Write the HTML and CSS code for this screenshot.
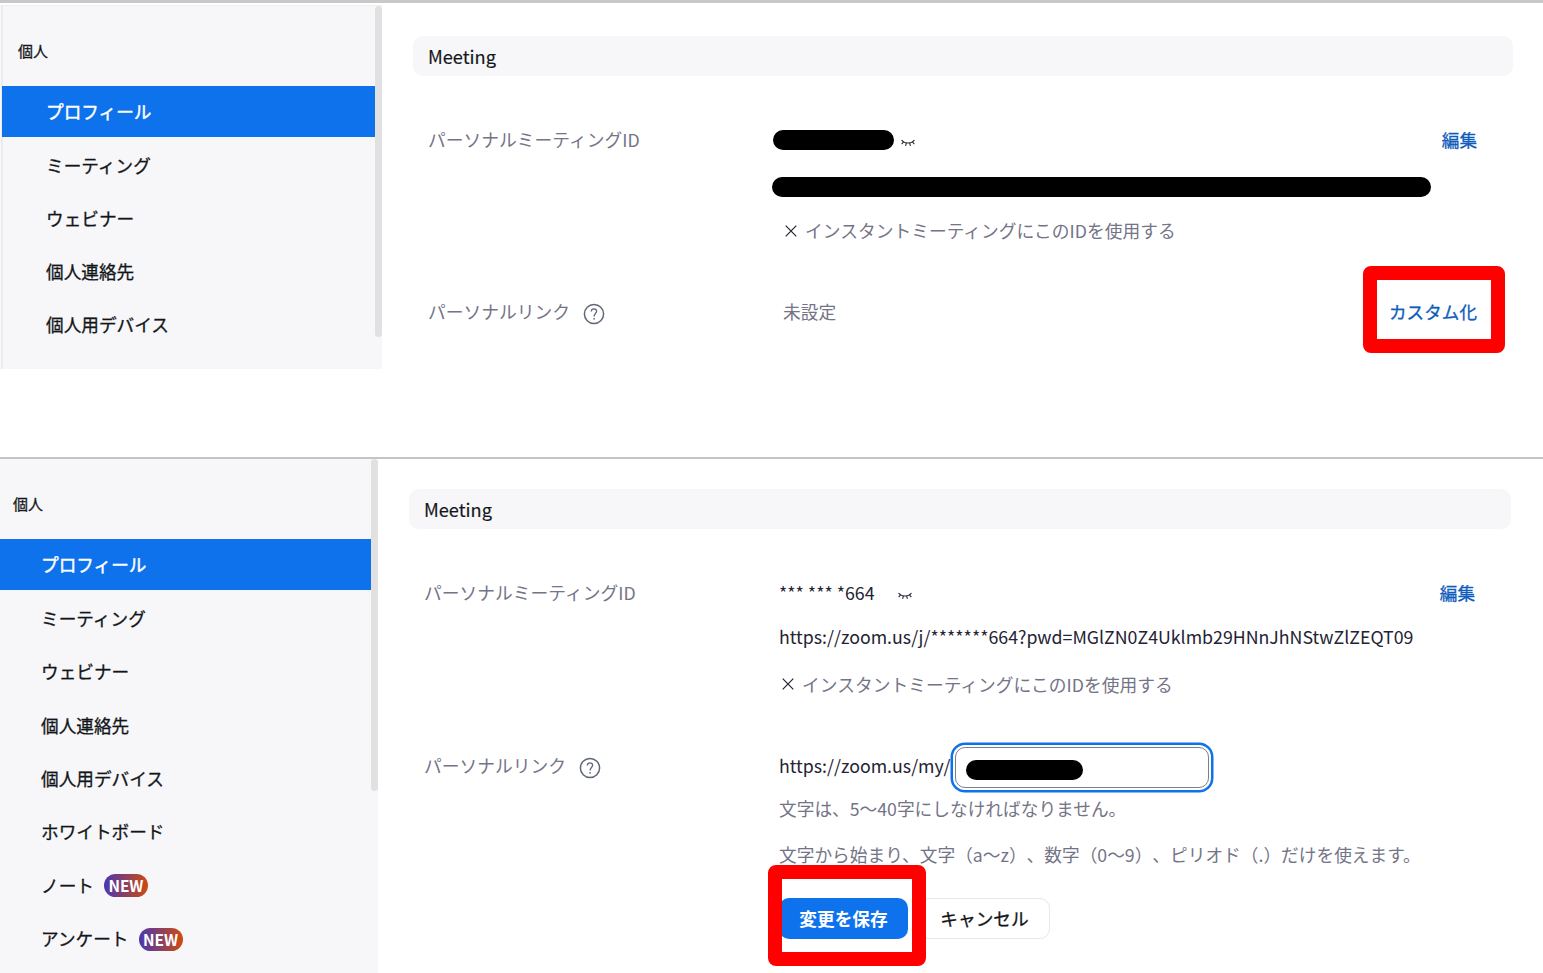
FILE: index.html
```html
<!DOCTYPE html>
<html lang="ja">
<head>
<meta charset="utf-8">
<title>プロフィール</title>
<link rel="stylesheet" href="styles.css">
</head>
<body>
<svg class="defs" aria-hidden="true">
  <symbol id="eye" viewBox="0 0 14 8"><path d="M.5 1C3.6 5 10.4 5 13.5 1M2.5 2.9.7 5.2M5.3 4.2 4.6 6.8M8.7 4.2l.7 2.6M11.5 2.9l1.8 2.3" fill="none" stroke="#33343d" stroke-width="1.2"/></symbol>
  <symbol id="cross" viewBox="0 0 12 12"><path d="M.7.7l10.6 10.6M11.3.7.7 11.3" fill="none" stroke="#222230" stroke-width="1.2"/></symbol>
  <symbol id="help" viewBox="0 0 22 22"><g fill="none" stroke="#606779" stroke-width="1.5"><circle cx="11" cy="11" r="9.6"/><path d="M8.3 8.5C8.3 6.8 9.4 5.8 11 5.8s2.6 1 2.6 2.5c0 2.1-2.5 2.4-2.5 5.2" stroke-width="1.3"/></g><circle cx="11.1" cy="15.8" r=".9" fill="#606779"/></symbol>
</svg>

<section class="panel panel-top">
  <nav class="side">
    <div class="side-list">
      <h2 class="side-title">個人</h2>
      <a class="item active">プロフィール</a>
      <a class="item">ミーティング</a>
      <a class="item">ウェビナー</a>
      <a class="item">個人連絡先</a>
      <a class="item">個人用デバイス</a>
    </div>
    <div class="scrollbar"></div>
  </nav>
  <main class="main">
    <h3 class="heading">Meeting</h3>
    <div class="row">
      <div class="label">パーソナルミーティングID</div>
      <div class="value">
        <div class="line id-line"><span class="mask mask-id"></span><svg class="eye"><use href="#eye"/></svg></div>
        <div class="line url-line"><span class="mask mask-url"></span></div>
        <div class="line instant"><svg class="cross"><use href="#cross"/></svg>インスタントミーティングにこのIDを使用する</div>
      </div>
      <a class="link">編集</a>
    </div>
    <div class="row row-link">
      <div class="label">パーソナルリンク<svg class="help"><use href="#help"/></svg></div>
      <div class="value muted">未設定</div>
      <a class="link marked">カスタム化</a>
    </div>
  </main>
</section>

<section class="panel panel-bottom">
  <nav class="side">
    <div class="side-list">
      <h2 class="side-title">個人</h2>
      <a class="item active">プロフィール</a>
      <a class="item">ミーティング</a>
      <a class="item">ウェビナー</a>
      <a class="item">個人連絡先</a>
      <a class="item">個人用デバイス</a>
      <a class="item">ホワイトボード</a>
      <a class="item">ノート<span class="new">NEW</span></a>
      <a class="item">アンケート<span class="new">NEW</span></a>
    </div>
    <div class="scrollbar"></div>
  </nav>
  <main class="main">
    <h3 class="heading">Meeting</h3>
    <div class="row">
      <div class="label">パーソナルミーティングID</div>
      <div class="value">
        <div class="line id-line"><span class="id-text">*** *** *664</span><svg class="eye"><use href="#eye"/></svg></div>
        <div class="line url-line">https://zoom.us/j/*******664?pwd=MGlZN0Z4Uklmb29HNnJhNStwZlZEQT09</div>
        <div class="line instant"><svg class="cross"><use href="#cross"/></svg>インスタントミーティングにこのIDを使用する</div>
      </div>
      <a class="link">編集</a>
    </div>
    <div class="row row-link">
      <div class="label">パーソナルリンク<svg class="help"><use href="#help"/></svg></div>
      <div class="value">
        <div class="line edit-line"><span>https://zoom.us/my/</span><div class="field"><span class="mask mask-name"></span></div></div>
        <p class="hint">文字は、5～40字にしなければなりません。</p>
        <p class="hint hint-second">文字から始まり、文字（a～z）、数字（0～9）、ピリオド（.）だけを使えます。</p>
        <div class="actions">
          <div class="save-wrap marked"><button class="btn save">変更を保存</button></div>
          <button class="btn cancel">キャンセル</button>
        </div>
      </div>
    </div>
  </main>
</section>
</body>
</html>
```
FILE: styles.css
```css
*, *::after { box-sizing: border-box; }
body {
  margin: 0;
  width: 1543px;
  height: 973px;
  overflow: hidden;
  background: #fff;
  color: #131619;
  font: 17.76px/24px "Noto Sans CJK JP", sans-serif;
  text-spacing-trim: space-all;
}
h2, h3, p { margin: 0; font-weight: 400; }
svg { display: block; flex: none; }
.defs { position: absolute; width: 0; height: 0; }

.panel { display: flex; align-items: flex-start; }
.panel-top { height: 457px; border-top: 3px solid #c8c8c8; padding-top: 2px; }
.panel-bottom { height: 516px; border-top: 2px solid #c4c4c6; }

.side { display: flex; flex: none; background: #f7f7fa; }
.panel-top .side { width: 382px; height: 364px; border-top: 1px solid #eeeeef; border-left: 1px solid #f7f7fa; }
.panel-bottom .side { width: 378px; height: 514px; }
.side-list { flex: 1; }
.panel-top .side-list { border-left: 2px solid #ececef; }
.side-title {
  font-size: 15px;
  line-height: 26px;
  padding: 32px 0 22px 15px;
  -webkit-text-stroke: .3px;
}
.panel-bottom .side-title { padding-left: 13px; }
.scrollbar { width: 7px; height: 331px; border-radius: 4px; background: #e1e1e2; }
.panel-bottom .scrollbar { height: 332px; }
.item {
  display: flex;
  align-items: center;
  height: 51px;
  margin-bottom: 2.2px;
  padding: 2px 0 0 43px;
  font-size: 17.65px;
  -webkit-text-stroke: .3px;
}
.panel-bottom .item { padding-left: 41px; margin-bottom: 2.4px; }
.item.active { padding-top: 1px; background: #0e72ed; color: #fff; -webkit-text-stroke: .45px; }
.panel-top .item.active { margin-left: -1px; padding-left: 44px; }
.new {
  width: 44px;
  height: 23px;
  margin-left: 10px;
  border-radius: 12px;
  background: linear-gradient(90deg, #4a37b0, #cf4a10);
  color: #fff;
  font: 700 15.4px/23px "Noto Sans CJK JP", sans-serif;
  text-align: center;
  -webkit-text-stroke: 0;
}

.main { flex: none; }
.panel-top .main { width: 1100px; margin: 31px 0 0 31px; }
.panel-bottom .main { width: 1102px; margin: 30px 0 0 31px; }
.heading {
  height: 40px;
  padding-left: 15px;
  border-radius: 10px;
  background: #f7f7fa;
  font-size: 18.2px;
  line-height: 40px;
  -webkit-text-stroke: .15px;
}
.row { display: flex; align-items: flex-start; padding: 51px 36px 0 15px; }
.label { display: flex; width: 355px; color: #747487; }
.panel-bottom .value { color: #232333; }
.value { flex: 1; }
.line { display: flex; align-items: center; height: 26px; padding-bottom: 2px; white-space: nowrap; }
.link { margin-top: 1px; color: #0e5cbc; font-size: 17.6px; -webkit-text-stroke: .3px; }
.eye { width: 14px; height: 8px; margin: 7px 0 0 7px; }
.id-text { width: 112px; }
.cross { width: 12px; height: 12px; margin: 1px 8.5px 0 2.5px; }
.panel-top .cross { margin-left: 1.5px; }
.instant, .muted { color: #747487; }
.panel-bottom .instant { color: #747487; }
.help { width: 22px; height: 22px; margin: 4px 0 0 13px; }
.mask { display: block; flex: none; height: 20px; border-radius: 10px; background: #000; }
.mask-id { width: 121px; margin: 2px 0 0 -10px; }
.mask-url { width: 659px; margin: 2px 0 0 -11.5px; }
.url-line { margin-top: 20.5px; }
.instant { margin-top: 18.5px; }
.row-link { padding-top: 55px; }

.marked { position: relative; }
.marked::after {
  content: "";
  position: absolute;
  border: 14px solid #f00;
  border-radius: 8px;
}
.link.marked::after { right: -28px; top: -34px; width: 142px; height: 87px; }
.save-wrap.marked::after { left: -11px; top: -33px; width: 158px; height: 101px; }

.panel-bottom .url-line { margin-top: 18px; }
.panel-bottom .instant { margin-top: 21.5px; }
.field {
  display: flex;
  align-items: center;
  width: 254px;
  height: 41px;
  margin: 6px 0 0 5px;
  padding: 4px 0 0 10px;
  border: 1px solid #7b7f88;
  border-radius: 10px;
  background: #fff;
  box-shadow: 0 0 0 2px #fff, 0 0 0 4.5px #0e72ed;
}
.mask-name { width: 117px; }
.hint { margin-top: 17px; color: #747487; font-size: 17.69px; white-space: nowrap; }
.hint-second { margin-top: 22px; }
.actions { display: flex; gap: 11px; margin-top: 32px; }
.btn {
  display: block;
  height: 41px;
  padding: 0;
  border: 0;
  border-radius: 10px;
  background: #fff;
  font: 17.7px/41px "Noto Sans CJK JP", sans-serif;
  color: #131619;
}
.save { width: 129px; background: #0e72ed; color: #fff; font-weight: 700; }
.cancel { width: 131px; border: 1px solid #e6e6ed; line-height: 39px; -webkit-text-stroke: .3px; }
```
